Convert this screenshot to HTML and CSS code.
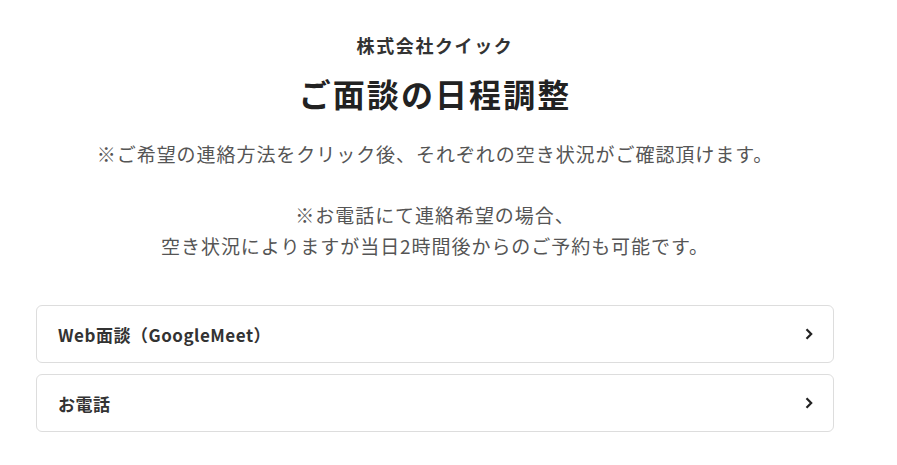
FILE: index.html
```html
<!DOCTYPE html>
<html lang="ja">
<head>
    <meta charset="UTF-8">
    <title>ご面談の日程調整</title>
    <link rel="stylesheet" href="styles.css">
</head>
<body>

<div class="page">
    <p class="company">株式会社クイック</p>
    <h1 class="title">ご面談の日程調整</h1>
    <p class="note">
        ※ご希望の連絡方法をクリック後、それぞれの空き状況がご確認頂けます。<br><br>
        ※お電話にて連絡希望の場合、<br>
        空き状況によりますが当日2時間後からのご予約も可能です。
    </p>

    <div class="choices">
        <a class="choice" href="#">
            <span>Web面談（GoogleMeet）</span>
            <svg class="chevron" viewBox="0 0 8 12" width="8" height="12">
                <path d="M1.5 1.2 L6.2 6 L1.5 10.8" fill="none" stroke="#222" stroke-width="2.2"/>
            </svg>
        </a>
        <a class="choice" href="#">
            <span>お電話</span>
            <svg class="chevron" viewBox="0 0 8 12" width="8" height="12">
                <path d="M1.5 1.2 L6.2 6 L1.5 10.8" fill="none" stroke="#222" stroke-width="2.2"/>
            </svg>
        </a>
    </div>
</div>

</body>
</html>
```

FILE: styles.css
```css
body {
    margin: 0;
    background: #fff;
    font-family: "Noto Sans CJK JP", "Noto Sans", sans-serif;
    color: #333;
}

.page {
    width: 798px;
    margin-left: 36px;
    padding-top: 31px;
    text-align: center;
}

.company {
    margin: 0;
    font-size: 18px;
    font-weight: bold;
    line-height: 28px;
    letter-spacing: 0.09em;
    color: #333;
}

.title {
    margin: 12px 0 0;
    font-size: 32px;
    font-weight: bold;
    line-height: 44px;
    letter-spacing: 0.065em;
    color: #222;
}

.note {
    margin: 24px 0 0;
    font-size: 19px;
    line-height: 30.5px;
    letter-spacing: 0.05em;
    color: #555;
}

.choices {
    margin-top: 44px;
    display: flex;
    flex-direction: column;
    gap: 11px;
}

.choice {
    display: flex;
    justify-content: space-between;
    align-items: center;
    height: 56px;
    padding: 0 20px 0 21px;
    border: 1px solid #ddd;
    border-radius: 6px;
    text-decoration: none;
    color: #333;
    font-size: 17px;
    font-weight: bold;
    letter-spacing: 0.03em;
    text-align: left;
}

.chevron {
    display: block;
}
```
